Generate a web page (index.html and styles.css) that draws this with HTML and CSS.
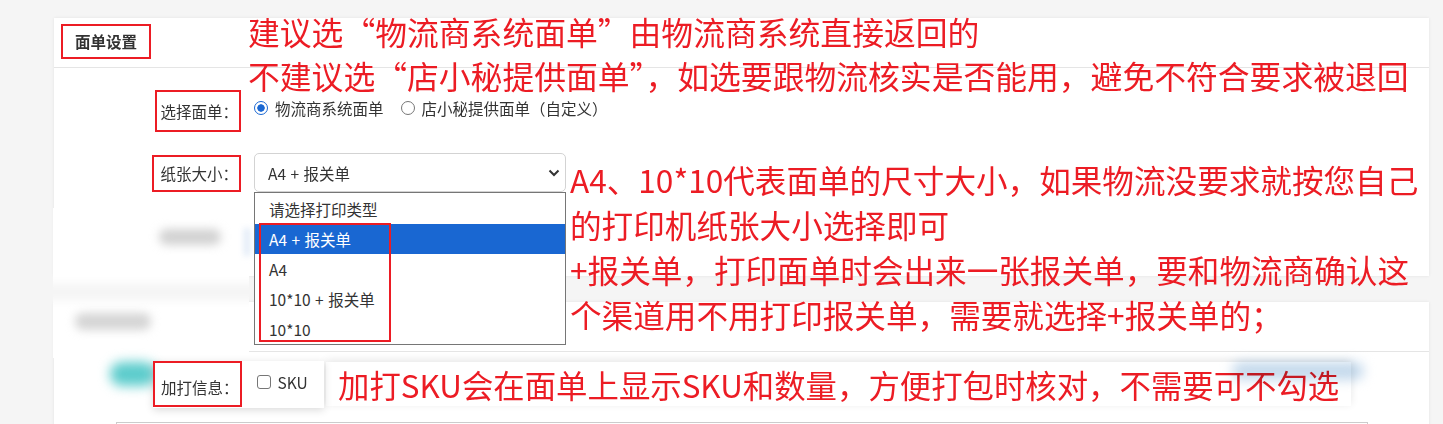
FILE: index.html
```html
<!DOCTYPE html>
<html>
<head>
  <meta charset="utf-8">
  <title>面单设置</title>
  <link rel="stylesheet" href="styles.css">
</head>
<body>
  <div class="page">
    <div class="card card-waybill">
      <div class="card-head">
        <span class="card-title mark">面单设置</span>
      </div>
      <div class="card-body">
        <div class="form-row row-type">
          <label class="form-label mark label-type">选择面单：</label>
          <div class="radio-group">
            <span class="radio-item"><span class="radio checked"></span>物流商系统面单</span>
            <span class="radio-item"><span class="radio"></span>店小秘提供面单（自定义）</span>
          </div>
        </div>
        <div class="form-row row-size">
          <label class="form-label mark label-size">纸张大小：</label>
          <div class="select-wrap">
            <div class="select">
              <span>A4 + 报关单</span>
              <svg width="12" height="8" viewBox="0 0 12 8"><path d="M1.5 1.5 6 6l4.5-4.5" fill="none" stroke="#333" stroke-width="2"/></svg>
            </div>
            <div class="select-menu">
              <ul class="menu-list">
                <li>请选择打印类型</li>
                <li class="active">A4 + 报关单</li>
                <li>A4</li>
                <li>10*10 + 报关单</li>
                <li>10*10</li>
              </ul>
              <div class="menu-mark"></div>
            </div>
          </div>
        </div>
      </div>
    </div>

    <div class="card card-print">
      <div class="card-head"></div>
      <div class="card-body">
        <div class="extra-pop">
          <label class="form-label mark label-extra">加打信息：</label>
          <span class="check-item"><span class="checkbox"></span>SKU</span>
        </div>
        <div class="info-box"></div>
      </div>
    </div>

    <!-- blurred bits of the page behind the pasted crops -->
    <div class="patch">
      <div class="blob blob-label"></div>
      <div class="blob blob-gap"></div>
      <div class="blob blob-title"></div>
    </div>
    <div class="blob blob-side"></div>
    <div class="blob blob-teal"></div>

    <!-- red notes -->
    <div class="note note-a">建议选“物流商系统面单”由物流商系统直接返回的<br>不建议选“店小秘提供面单”，如选要跟物流核实是否能用，避免不符合要求被退回</div>
    <div class="note note-b">A4、10*10代表面单的尺寸大小，如果物流没要求就按您自己<br>的打印机纸张大小选择即可<br>+报关单，打印面单时会出来一张报关单，要和物流商确认这<br>个渠道用不用打印报关单，需要就选择+报关单的；</div>
    <div class="note note-c">加打SKU会在面单上显示SKU和数量，方便打包时核对，不需要可不勾选</div>
    <div class="blob blob-blue"></div>
  </div>
</body>
</html>
```

FILE: styles.css
```css
/* page */
html, body {
  margin: 0;
  height: 100%;
  overflow: hidden;
}
body {
  background: #f5f5f5;
  font-family: "Noto Sans CJK SC", "Microsoft YaHei", sans-serif;
  color: #333;
}
.page {
  position: relative;
  width: 1443px;
  height: 424px;
  padding: 18px 14px 0 54px;
  box-sizing: border-box;
}

/* cards */
.card {
  background: #fff;
  box-shadow: 0 0 3px rgba(0, 0, 0, 0.08);
}
.card-waybill {
  height: 258px;
}
.card-print {
  margin-top: 26px;
  height: 160px;
  overflow: hidden;
}
.card-head {
  height: 49px;
  border-bottom: 1px solid #e5e5e5;
}
.card-waybill .card-body {
  padding-top: 22px;
}
.card-print .card-body {
  padding-top: 9px;
}

/* red marks */
.mark {
  border: 2px solid #ec1c24;
  box-sizing: border-box;
}
.card-title {
  display: inline-block;
  margin: 6px 0 0 7px;
  padding: 0 12px;
  height: 35px;
  line-height: 31px;
  font-size: 15.5px;
  font-weight: bold;
  color: #333;
}

/* form rows */
.form-row {
  display: grid;
  grid-template-columns: 187px 312px;
  column-gap: 13px;
}
.form-label {
  justify-self: end;
  font-size: 15.5px;
  white-space: nowrap;
}
.row-type {
  align-items: center;
}
.label-type {
  height: 42px;
  line-height: 38px;
  padding: 0 1px 0 3px;
}
.radio-group {
  display: flex;
  align-items: center;
  margin-top: -6px;
  font-size: 15.5px;
  white-space: nowrap;
}
.radio-item {
  display: inline-flex;
  align-items: center;
}
.radio-item + .radio-item {
  margin-left: 17px;
}
.radio {
  width: 14px;
  height: 14px;
  margin-right: 7px;
  border: 1px solid #767676;
  border-radius: 50%;
  box-sizing: border-box;
  background: #fff;
}
.radio.checked {
  border: 1.5px solid #1967d2;
  background: radial-gradient(circle, #1967d2 0 3.4px, #fff 4px);
}

.row-size {
  margin-top: 21px;
  align-items: end;
}
.label-size {
  height: 37px;
  line-height: 33px;
  padding: 0 1px 0 6px;
}
.select-wrap {
  position: relative;
}
.select {
  display: flex;
  justify-content: space-between;
  align-items: center;
  height: 39px;
  padding: 0 5px 0 13px;
  border: 1px solid #d3d3d3;
  border-radius: 5px;
  box-sizing: border-box;
  font-size: 15.5px;
  word-spacing: 1px;
}
.select-menu {
  position: absolute;
  top: 100%;
  left: 0;
  width: 312px;
  padding-top: 1px;
  border: 1px solid #767676;
  box-sizing: border-box;
  background: #fff;
  z-index: 5;
}
.menu-list {
  margin: 0;
  padding: 0;
  list-style: none;
}
.menu-list li {
  height: 30px;
  line-height: 30px;
  padding-left: 14px;
  font-size: 15.5px;
  word-spacing: 1px;
}
.menu-list li.active {
  background: #1967d2;
  color: #fff;
}
.menu-mark {
  position: absolute;
  left: 4px;
  top: 30px;
  width: 132px;
  height: 119px;
  border: 2px solid #ec1c24;
  box-sizing: border-box;
}

/* print info */
.extra-pop {
  position: relative;
  z-index: 3;
  display: flex;
  align-items: center;
  width: 171px;
  height: 47px;
  margin-left: 99px;
  background: #fff;
  box-shadow: 0 2px 8px rgba(0, 0, 0, 0.15);
}
.label-extra {
  align-self: stretch;
  height: 46px;
  line-height: 36px;
  padding: 6px 1px 0 6px;
}
.check-item {
  display: inline-flex;
  align-items: center;
  margin-left: 15px;
  margin-top: -6px;
  font-size: 15.5px;
}
.checkbox {
  width: 14px;
  height: 14px;
  margin-right: 7px;
  border: 1px solid #767676;
  border-radius: 3px;
  box-sizing: border-box;
}
.info-box {
  width: 1250px;
  height: 60px;
  margin: 14px 0 0 62px;
  border: 1px solid #ccc;
}

/* blurred background */
.patch {
  position: absolute;
  left: 53px;
  top: 208px;
  width: 196px;
  height: 150px;
  background: #fff;
  overflow: hidden;
}
.blob {
  position: absolute;
  filter: blur(5px);
}
.blob-label {
  left: 106px;
  top: 21px;
  width: 62px;
  height: 16px;
  border-radius: 8px;
  background: #d2d2d2;
}
.blob-gap {
  left: -10px;
  top: 76px;
  width: 216px;
  height: 16px;
  background: #f4f4f4;
}
.blob-title {
  left: 22px;
  top: 105px;
  width: 76px;
  height: 17px;
  border-radius: 8px;
  background: #d5d5d5;
}
.blob-side {
  left: 244px;
  top: 228px;
  width: 6px;
  height: 28px;
  background: #e0eaf7;
  filter: blur(3px);
}
.blob-teal {
  left: 110px;
  top: 362px;
  width: 46px;
  height: 24px;
  border-radius: 12px;
  background: #5ccccc;
  filter: blur(6px);
}
.blob-blue {
  left: 1232px;
  top: 362px;
  width: 132px;
  height: 18px;
  border-radius: 9px;
  background: #c4d9ec;
  mix-blend-mode: multiply;
  filter: blur(6px);
}

/* notes */
.note {
  position: absolute;
  color: #ec1c24;
  white-space: nowrap;
  font-family: "Noto Sans CJK SC", sans-serif;
}
.note-a {
  left: 248px;
  top: 9px;
  font-size: 31.8px;
  line-height: 44px;
}
.note-b {
  left: 570px;
  top: 157px;
  font-size: 31.6px;
  line-height: 45px;
}
.note-c {
  left: 326px;
  top: 362px;
  padding: 2px 12px 0;
  font-size: 31.4px;
  line-height: 42px;
  background: #fff;
  box-shadow: 0 -2px 8px rgba(0, 0, 0, 0.1);
}
```
